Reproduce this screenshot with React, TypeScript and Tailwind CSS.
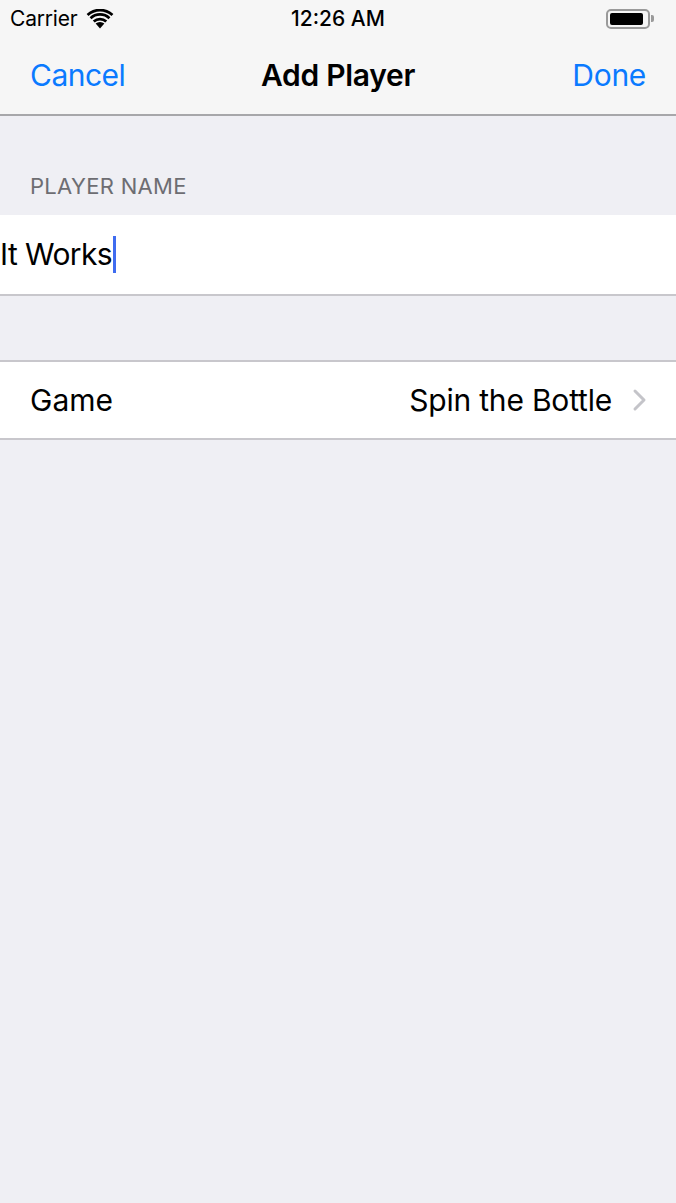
import React from "react";

const font = { fontFamily: 'Inter, "Liberation Sans", sans-serif' };

function Wifi() {
    return (
        <svg width="28" height="20" viewBox="0 0 28 20">
            <path d="M14 19.5 L9.6 14.6 A6.5 6.5 0 0 1 18.4 14.6 Z" fill="#000" />
            <path d="M6.8 11.6 A10.5 10.5 0 0 1 21.2 11.6 L19.3 13.6 A7.8 7.8 0 0 0 8.7 13.6 Z" fill="#000" />
            <path d="M3.6 8.2 A15 15 0 0 1 24.4 8.2 L22.5 10.2 A12.2 12.2 0 0 0 5.5 10.2 Z" fill="#000" />
            <path d="M0.6 5 A19.5 19.5 0 0 1 27.4 5 L25.5 7 A16.8 16.8 0 0 0 2.5 7 Z" fill="#000" />
        </svg>
    );
}

function Battery() {
    return (
        <div className="flex items-center">
            <div className="w-[44px] h-[20px] rounded-[5px] border-[2px] border-[#9a9a9a] p-[2px]">
                <div className="w-[33px] h-full bg-black rounded-[2px]"></div>
            </div>
            <div className="w-[3px] h-[7px] bg-[#9a9a9a] rounded-r-[2px] ml-[1px]"></div>
        </div>
    );
}

export default function App() {
    return (
        <div className="w-[676px] min-h-[1203px] bg-[#efeff4] text-black" style={font}>
            <div className="bg-[#f6f6f6] border-b-[2px] border-[#a7a7aa]">
                <div className="h-[37px] flex items-center justify-between pl-[10px] pr-[12px] relative">
                    <div className="flex items-center gap-[9px] text-[21px] tracking-[-0.2px]">
                        <span>Carrier</span>
                        <Wifi />
                    </div>
                    <div className="absolute left-0 right-0 text-center text-[21px] font-medium pointer-events-none">
                        12:26 AM
                    </div>
                    <div className="pr-[10px]">
                        <Battery />
                    </div>
                </div>
                <div className="h-[77px] flex items-center justify-between px-[30px] relative">
                    <span className="text-[30px] text-[#0a7aff] tracking-[-0.5px]">Cancel</span>
                    <span className="absolute left-0 right-0 text-center text-[30px] font-semibold tracking-[-0.3px] pointer-events-none">
                        Add Player
                    </span>
                    <span className="text-[30px] text-[#0a7aff] tracking-[-0.3px]">Done</span>
                </div>
            </div>

            <div className="pt-[54px] pb-[12px] px-[30px] text-[22px] text-[#6d6d72] tracking-[0.3px]">
                PLAYER NAME
            </div>
            <div className="bg-white h-[81px] border-b-[2px] border-[#c8c7cc] flex items-center">
                <span className="text-[30px] tracking-[-0.6px]">It Works</span>
                <span className="w-[3px] h-[37px] bg-[#3f6cf0] ml-[1px]"></span>
            </div>

            <div className="h-[64px]"></div>

            <div className="bg-white h-[80px] border-y-[2px] border-[#c8c7cc] flex items-center justify-between pl-[30px] pr-[28px]">
                <span className="text-[30px]">Game</span>
                <div className="flex items-center gap-[20px]">
                    <span className="text-[30px] tracking-[-0.2px]">Spin the Bottle</span>
                    <svg width="16" height="24" viewBox="0 0 16 24">
                        <path d="M3 3 L12 12 L3 21" stroke="#c4c4c9" strokeWidth="3" fill="none" strokeLinecap="round" strokeLinejoin="round" />
                    </svg>
                </div>
            </div>
        </div>
    );
}
